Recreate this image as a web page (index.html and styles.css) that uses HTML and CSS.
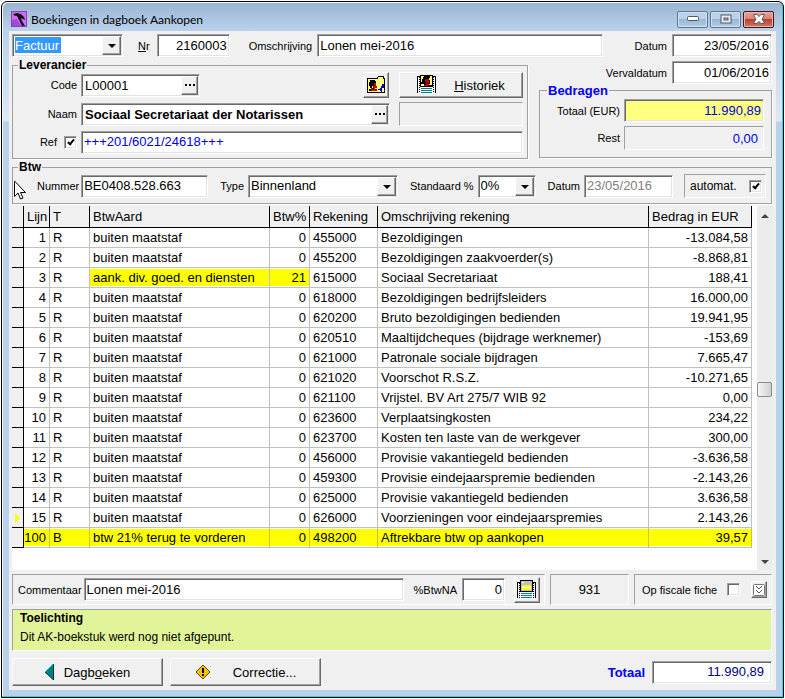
FILE: index.html
```html
<!DOCTYPE html>
<html lang="nl">
<head>
  <meta charset="utf-8">
  <title>Boekingen in dagboek Aankopen</title>
  <link rel="stylesheet" href="styles.css">
</head>
<body>
<div class="window">
  <div class="title-bar">
    <svg class="app-icon" width="16" height="16" viewBox="0 0 16 16">
      <rect width="16" height="16" fill="#8a3fb0"/>
      <rect x="1" y="1" width="14" height="14" fill="#cf6df0"/>
      <path d="M1 15V9l5-1 4 7z" fill="#a548d8"/>
      <path d="M2 3l4-1 4 1 3 3 1 3-2-1-2-1 1 3 3 5h-3L8 9 6 5 4 5z" fill="#140a20"/>
    </svg>
    <span class="title">Boekingen in dagboek Aankopen</span>
    <button class="win-button" aria-label="Minimaliseren">
      <svg width="12" height="6" viewBox="0 0 12 6"><rect x=".5" y=".5" width="11" height="4" rx="1" fill="#fff" stroke="#535666"/></svg>
    </button>
    <button class="win-button" aria-label="Maximaliseren">
      <svg width="12" height="10" viewBox="0 0 12 10"><rect x="1" y="1" width="10" height="8" fill="#e8eef5" stroke="#535666"/><rect x="4" y="4" width="4" height="2" fill="#a9c3de" stroke="#535666"/></svg>
    </button>
    <button class="win-button win-close" aria-label="Sluiten">
      <svg width="12" height="10" viewBox="0 0 12 10"><path d="M1 .5h3l2 2 2-2h3V2L9 5l2 3v1.500H8l-2-2-2 2H1V8l2-3-2-3z" fill="#fff" stroke="#535666"/></svg>
    </button>
  </div>

  <div class="content">
    <div class="top-row">
      <span class="combo combo-doc">
        <select class="doc-type" aria-label="Documenttype">
          <option>Factuur</option>
        </select>
      </span>
      <label class="nr-label" for="nr"><u>N</u>r</label>
      <input class="field nr right" id="nr" value="2160003">
      <label class="oms-label" for="omschrijving">Omschrijving</label>
      <input class="field grow" id="omschrijving" value="Lonen mei-2016">
      <label class="date-label" for="datum">Datum</label>
      <input class="field date right" id="datum" value="23/05/2016">
    </div>

    <div class="main-grid">
      <fieldset class="supplier">
        <legend>Leverancier</legend>
        <label for="code">Code</label>
        <div class="code-cell">
          <div class="lookup lookup-code">
            <input id="code" value="L00001">
            <button aria-label="Zoek code"><i></i><i></i><i></i></button>
          </div>
          <button class="button icon-button" aria-label="Leveranciersfiche">
            <svg width="20" height="20" viewBox="0 0 20 20" shape-rendering="crispEdges">
              <path d="M1 3h10V2l1-1h5l1 1v1h1v15H1z" fill="#000"/>
              <path d="M2 4h10V2h5v2h1v13H2z" fill="#ffff7d"/>
              <path d="M4 5h5v1h1v3H8v2H6v2H4v-2H3V7h1z" fill="#000"/>
              <path d="M8 8h2v3h1v2H9v1h2v2H4v-1h1v-2h2v-2h1z" fill="#c00000"/>
              <path d="M3 14h2v2H3zM6 13h2v1H6z" fill="#000"/>
              <path d="M16 9h2v4h-2v4h-1v-1h-1v-1h-2v-1h2v-1h1v-2h1z" fill="#0000e0"/>
            </svg>
          </button>
        </div>
        <button class="button history">
          <svg width="20" height="20" viewBox="0 0 20 20" shape-rendering="crispEdges">
            <path d="M0 1h3v17H0zM17 1h2v17h-2z" fill="#fff"/>
            <path d="M.5 18V1.500h3M16 1.500h2.500V18" fill="none" stroke="#000"/>
            <path d="M2.500 2v16M16.500 2v16" stroke="#000" stroke-dasharray="1 1"/>
            <rect x="3" y="11" width="13" height="8" fill="#fff"/>
            <path d="M4 13.500h11M4 15.500h11M4 17.500h11" stroke="#008080"/>
            <rect x="3" y="0" width="13" height="12" fill="#000"/>
            <path d="M4 1h3v1H6v2H5v3H4zM13 1h2v9h-3V9h1V5h-1V3h1zM4 9h3v2H4z" fill="#ffff7d"/>
            <path d="M9 4h3v4h-1v1h1v2H7v-1h2V7H8V5h1z" fill="#c00000"/>
          </svg>
          <span><u>H</u>istoriek</span>
        </button>
        <label for="naam">Naam</label>
        <div class="lookup lookup-name">
          <input id="naam" value="Sociaal Secretariaat der Notarissen">
          <button aria-label="Zoek naam"><i></i><i></i><i></i></button>
        </div>
        <div class="panel"></div>
        <div class="ref-label">
          <label for="ref">Ref</label>
          <input class="check" type="checkbox" checked aria-label="Gestructureerde mededeling">
        </div>
        <input class="field ref blue" id="ref" value="+++201/6021/24618+++">
      </fieldset>

      <div class="side">
        <div class="due-row">
          <label for="verval">Vervaldatum</label>
          <input class="field date right" id="verval" value="01/06/2016">
        </div>
        <fieldset class="amounts">
          <legend>Bedragen</legend>
          <label for="eur">Totaal (EUR)</label>
          <input class="field yellow right blue" id="eur" value="11.990,89">
          <label for="rest">Rest</label>
          <output class="panel rest blue" id="rest">0,00</output>
        </fieldset>
      </div>
    </div>

    <fieldset class="vat">
      <legend>Btw</legend>
      <label class="nummer-label" for="nummer">Nummer</label>
      <input class="field nummer" id="nummer" value="BE0408.528.663">
      <label for="type">Type</label>
      <span class="combo combo-type">
        <select id="type"><option>Binnenland</option></select>
      </span>
      <label for="standaard">Standaard %</label>
      <span class="combo combo-pct">
        <select id="standaard"><option>0%</option></select>
      </span>
      <label for="btwdatum">Datum</label>
      <input class="field btw-datum" id="btwdatum" value="23/05/2016" disabled>
      <div class="panel automat">
        <label for="automat">automat.</label>
        <input class="check" id="automat" type="checkbox" checked>
      </div>
      <svg class="cursor" width="13" height="20" viewBox="0 0 13 20"><path d="M.5 1v15.500l3.500-3.500 2.500 6 2.500-1-2.500-5.500h5z" fill="#fff" stroke="#000"/></svg>
    </fieldset>

    <div class="grid-box">
      <div class="table-wrap">
        <table class="lines">
          <colgroup>
            <col class="c-mark"><col class="c-lijn"><col class="c-t"><col class="c-aard"><col class="c-pct"><col class="c-rek"><col><col class="c-bedrag">
          </colgroup>
          <thead>
            <tr><th></th><th>Lijn</th><th>T</th><th>BtwAard</th><th>Btw%</th><th>Rekening</th><th>Omschrijving rekening</th><th>Bedrag in EUR</th></tr>
          </thead>
          <tbody>
            <tr><th></th><td>1</td><td>R</td><td>buiten maatstaf</td><td>0</td><td>455000</td><td>Bezoldigingen</td><td>-13.084,58</td></tr>
            <tr><th></th><td>2</td><td>R</td><td>buiten maatstaf</td><td>0</td><td>455200</td><td>Bezoldigingen zaakvoerder(s)</td><td>-8.868,81</td></tr>
            <tr><th></th><td>3</td><td>R</td><td class="hl">aank. div. goed. en diensten</td><td class="hl">21</td><td>615000</td><td>Sociaal Secretariaat</td><td>188,41</td></tr>
            <tr><th></th><td>4</td><td>R</td><td>buiten maatstaf</td><td>0</td><td>618000</td><td>Bezoldigingen bedrijfsleiders</td><td>16.000,00</td></tr>
            <tr><th></th><td>5</td><td>R</td><td>buiten maatstaf</td><td>0</td><td>620200</td><td>Bruto bezoldigingen bedienden</td><td>19.941,95</td></tr>
            <tr><th></th><td>6</td><td>R</td><td>buiten maatstaf</td><td>0</td><td>620510</td><td>Maaltijdcheques (bijdrage werknemer)</td><td>-153,69</td></tr>
            <tr><th></th><td>7</td><td>R</td><td>buiten maatstaf</td><td>0</td><td>621000</td><td>Patronale sociale bijdragen</td><td>7.665,47</td></tr>
            <tr><th></th><td>8</td><td>R</td><td>buiten maatstaf</td><td>0</td><td>621020</td><td>Voorschot R.S.Z.</td><td>-10.271,65</td></tr>
            <tr><th></th><td>9</td><td>R</td><td>buiten maatstaf</td><td>0</td><td>621100</td><td>Vrijstel. BV Art 275/7 WIB 92</td><td>0,00</td></tr>
            <tr><th></th><td>10</td><td>R</td><td>buiten maatstaf</td><td>0</td><td>623600</td><td>Verplaatsingkosten</td><td>234,22</td></tr>
            <tr><th></th><td>11</td><td>R</td><td>buiten maatstaf</td><td>0</td><td>623700</td><td>Kosten ten laste van de werkgever</td><td>300,00</td></tr>
            <tr><th></th><td>12</td><td>R</td><td>buiten maatstaf</td><td>0</td><td>456000</td><td>Provisie vakantiegeld bedienden</td><td>-3.636,58</td></tr>
            <tr><th></th><td>13</td><td>R</td><td>buiten maatstaf</td><td>0</td><td>459300</td><td>Provisie eindejaarspremie bedienden</td><td>-2.143,26</td></tr>
            <tr><th></th><td>14</td><td>R</td><td>buiten maatstaf</td><td>0</td><td>625000</td><td>Provisie vakantiegeld bedienden</td><td>3.636,58</td></tr>
            <tr><th><i class="current"></i></th><td>15</td><td>R</td><td>buiten maatstaf</td><td>0</td><td>626000</td><td>Voorzieningen voor eindejaarspremies</td><td>2.143,26</td></tr>
            <tr class="hl-row"><th></th><td>100</td><td>B</td><td>btw 21% terug te vorderen</td><td>0</td><td>498200</td><td>Aftrekbare btw op aankopen</td><td>39,57</td></tr>
          </tbody>
        </table>
      </div>
      <div class="scrollbar">
        <i class="arrow up"></i>
        <i class="thumb"></i>
        <i class="arrow down"></i>
      </div>
    </div>

    <div class="comment-row">
      <div class="panel comment">
        <label for="commentaar">Commentaar</label>
        <input class="field grow" id="commentaar" value="Lonen mei-2016">
        <label class="na-label" for="btwna">%BtwNA</label>
        <input class="field na right" id="btwna" value="0">
        <button class="button icon-button" aria-label="Detail">
          <svg width="20" height="20" viewBox="0 0 20 20" shape-rendering="crispEdges">
            <path d="M.5 18V2.500h3M16 2.500h2.500V18" fill="none" stroke="#000"/>
            <path d="M2.500 3v15M16.500 3v15" stroke="#000" stroke-dasharray="1 1"/>
            <rect x="3" y="11" width="13" height="8" fill="#fff"/>
            <path d="M4 13.500h11M4 15.500h11M4 17.500h11" stroke="#008080"/>
            <rect x="3" y="0" width="13" height="12" fill="#000"/>
            <rect x="4" y="1" width="11" height="10" fill="#c0c0c0"/>
            <path d="M5 5h9v2H5zM5 8h9v2H5z" fill="#ff0"/>
            <path d="M5 2h2v1H5zM5 7h9v1H5z" fill="#fff"/>
          </svg>
        </button>
      </div>
      <div class="panel number">931</div>
      <div class="panel fiche">
        <label for="fiche">Op fiscale fiche</label>
        <input class="check" id="fiche" type="checkbox">
        <button class="button small-button" aria-label="Meer">
          <svg width="12" height="12" viewBox="0 0 12 12"><rect x=".5" y=".5" width="11" height="11" rx="1" fill="#fff" stroke="#777"/><path d="M3 2l3 3 3-3M3 6l3 3 3-3" fill="none" stroke="#555"/></svg>
        </button>
      </div>
    </div>

    <div class="note">
      <b>Toelichting</b>
      <p>Dit AK-boekstuk werd nog niet afgepunt.</p>
    </div>

    <div class="footer">
      <button class="button big">
        <svg width="9" height="16" viewBox="0 0 9 16"><path d="M8.500 0v16L0 8z" fill="#008080"/><path d="M8 0L0 8" stroke="#00e0e0"/><path d="M8.500 0v16L0 8" fill="none" stroke="#034"/></svg>
        <span>Dagb<u>o</u>eken</span>
      </button>
      <button class="button big correct">
        <svg width="16" height="16" viewBox="0 0 16 16"><path d="M8 1l7 7-7 7-7-7z" fill="#f8c400" stroke="#5a4600"/><path d="M7 4h2v5H7zM7 10h2v2H7z" fill="#000"/></svg>
        <span>Correctie...</span>
      </button>
      <label for="totaal">Totaal</label>
      <input class="field total right" id="totaal" value="11.990,89">
    </div>
  </div>
</div>
</body>
</html>
```
FILE: styles.css
```css
* {
  box-sizing: border-box;
}

body {
  margin: 0;
  background: #fff;
  color: #000;
  font-family: "Liberation Sans", Arial, sans-serif;
  font-size: 11px;
}

input, select, button, output {
  font-family: inherit;
  font-size: 13px;
  color: inherit;
  margin: 0;
}

/* window frame */
.window {
  display: flex;
  flex-direction: column;
  min-height: calc(100vh - 2px);
  margin: 1px;
  padding: 1px 7px 7px;
  border: 1px solid #000;
  border-radius: 6px 6px 0 0;
  background: linear-gradient(#99b4d1 0, #b9d1ea 28px, #dde9f6 119px, #b9d1ea 120px);
  box-shadow: inset -1px -1px #35d3ea, inset 1px 1px #f4f8fc;
}

.title-bar {
  display: flex;
  align-items: center;
  gap: 2px;
  height: 28px;
  padding: 4px 2px 0;
}

.title {
  flex: 1;
  padding-left: 2px;
  font-family: Lato, "Open Sans", sans-serif;
  font-size: 12px;
}

.win-button {
  display: flex;
  align-items: center;
  justify-content: center;
  width: 31px;
  height: 17px;
  padding: 0;
  border: 1px solid #5f7690;
  border-radius: 2px;
  background: linear-gradient(#bdd2e8 0 50%, #9ab6d3 50%, #b3cde8);
  box-shadow: inset 0 0 0 1px #cfe0f1;
}

.win-close {
  border-color: #431422;
  background: linear-gradient(#e6a193 0, #d88070 50%, #b8402c 50%, #d27a62);
  box-shadow: inset 0 0 0 1px #eab5aa;
}

.content {
  display: flex;
  flex-direction: column;
  flex: 1;
  padding: 3px 4px 4px 3px;
  background: #f0f0f0;
}

/* shared controls */
.field, .lookup, .combo {
  height: 23px;
  border: 1px solid;
  border-color: #a0a0a0 #fff #fff #a0a0a0;
  box-shadow: inset 1px 1px #696969, inset -1px -1px #e3e3e3;
  background: #fff;
}

.field {
  padding: 0 2px 1px;
  min-width: 0;
}

.right {
  text-align: right;
}

.grow {
  flex: 1;
}

.blue {
  color: #0000e0;
}

.combo {
  position: relative;
  display: block;
}

.combo select {
  appearance: none;
  width: 100%;
  height: 100%;
  padding: 0 18px 1px 2px;
  border: none;
  background: transparent;
}

.combo::before {
  content: "";
  position: absolute;
  top: 1px;
  right: 1px;
  bottom: 1px;
  width: 17px;
  border: 1px solid;
  border-color: #fff #696969 #696969 #fff;
  box-shadow: inset -1px -1px #a0a0a0;
  background: #f0f0f0;
  pointer-events: none;
}

.combo::after {
  content: "";
  position: absolute;
  top: 9px;
  right: 6px;
  border: 4px solid transparent;
  border-top-color: #000;
  border-bottom: none;
  pointer-events: none;
}

.combo .doc-type {
  color: #fff;
  background: linear-gradient(#39f, #39f) 2px 2px / 46px 16px no-repeat;
}

.lookup {
  display: flex;
  padding: 1px;
}

.lookup input {
  flex: 1;
  min-width: 0;
  padding: 0 2px;
  border: none;
  background: transparent;
}

.lookup button {
  display: flex;
  align-items: center;
  justify-content: center;
  gap: 2px;
  width: 17px;
  padding: 0;
  border: 1px solid;
  border-color: #fff #696969 #696969 #fff;
  box-shadow: inset -1px -1px #a0a0a0;
  background: #f0f0f0;
}

.lookup i {
  width: 2px;
  height: 2px;
  background: #000;
}

.button {
  display: flex;
  align-items: center;
  justify-content: center;
  padding: 0;
  border: 1px solid;
  border-color: #fff #696969 #696969 #fff;
  box-shadow: inset -1px -1px #a0a0a0;
  background: #f0f0f0;
}

.icon-button {
  width: 26px;
  height: 26px;
}

.panel {
  border: 1px solid;
  border-color: #a0a0a0 #fff #fff #a0a0a0;
}

.check {
  appearance: none;
  flex: none;
  width: 13px;
  height: 13px;
  border: 1px solid;
  border-color: #a0a0a0 #fff #fff #a0a0a0;
  box-shadow: inset 1px 1px #696969, inset -1px -1px #e3e3e3;
  background: #fff;
}

.check:checked::before {
  content: "";
  display: block;
  width: 2px;
  height: 5px;
  margin: 1px 0 0 4px;
  border: solid #000;
  border-width: 0 2px 2px 0;
  box-sizing: content-box;
  transform: rotate(40deg);
}

fieldset {
  min-width: 0;
  margin: 0;
  border: 1px solid #a0a0a0;
  box-shadow: 1px 1px #fff;
}

legend {
  margin: 0;
  padding: 0 1px;
  font-size: 12px;
  line-height: 13px;
  font-weight: bold;
}

/* header fields */
.top-row {
  display: flex;
  align-items: center;
}

.combo-doc {
  width: 111px;
}

.nr-label {
  padding: 0 7px 0 15px;
}

.nr {
  width: 73px;
}

.oms-label {
  padding: 0 5px 0 19px;
}

.date-label {
  width: 69px;
  padding-right: 5px;
  text-align: right;
}

.date {
  width: 100px;
}

.main-grid {
  display: grid;
  grid-template-columns: 1fr 233px;
  gap: 11px;
  margin-top: 2px;
}

.supplier {
  display: grid;
  grid-template-columns: 64px 1fr 124px;
  grid-template-rows: 26px 24px 24px;
  align-items: center;
  gap: 4px;
  padding: 0 4px 4px 0;
}

.supplier legend, .vat legend {
  margin-left: 5px;
}

.supplier > label, .ref-label, .amounts label {
  text-align: right;
}

.code-cell {
  display: flex;
  align-items: center;
  justify-content: space-between;
  padding-right: 6px;
}

.lookup-code {
  width: 119px;
}

.lookup-name {
  margin-right: 5px;
}

.lookup-name input {
  font-weight: bold;
}

.history {
  gap: 17px;
  height: 26px;
}

.supplier .panel {
  height: 24px;
}

.ref-label {
  display: flex;
  align-items: center;
  justify-content: flex-end;
  gap: 7px;
}

.ref {
  grid-column: 2 / 4;
}

.due-row {
  display: flex;
  align-items: center;
  justify-content: flex-end;
  gap: 5px;
  padding-top: 2px;
}

.amounts {
  display: grid;
  grid-template-columns: 80px 1fr;
  align-items: center;
  gap: 4px;
  padding: 2px 7px 7px 0;
}

.amounts legend {
  margin-left: 7px;
  font-size: 13px;
  color: #0000ff;
}

.yellow {
  background: #ffff80;
}

.rest {
  height: 24px;
  padding: 0 5px;
  line-height: 23px;
  text-align: right;
}

.vat {
  position: relative;
  display: flex;
  align-items: center;
  margin-top: 2px;
  padding: 0 5px 5px 0;
}

.vat > label {
  padding: 0 4px 0 12px;
}

.vat > .nummer-label {
  padding: 0 2px 0 24px;
}

.nummer {
  width: 127px;
}

.combo-type {
  flex: 1;
}

.combo-pct {
  width: 58px;
}

.btw-datum {
  width: 89px;
  color: #808080;
}

.automat {
  display: flex;
  align-items: center;
  justify-content: space-between;
  width: 82px;
  height: 24px;
  margin-left: 11px;
  padding: 0 3px 0 5px;
  font-size: 12px;
}

.cursor {
  position: absolute;
  left: 1px;
  top: 6px;
}

/* booking lines */
.grid-box {
  display: flex;
  flex: 1;
  margin-top: 2px;
}

.table-wrap {
  flex: 1;
  padding-right: 5px;
  background: #fff;
}

.lines {
  width: 100%;
  table-layout: fixed;
  border-spacing: 0;
  font-size: 13px;
}

.c-mark { width: 12px; }
.c-lijn { width: 26px; }
.c-t { width: 40px; }
.c-aard { width: 180px; }
.c-pct { width: 40px; }
.c-rek { width: 68px; }
.c-bedrag { width: 103px; }

.lines th, .lines td {
  height: 20px;
  padding: 0 3px;
  line-height: 19px;
  white-space: nowrap;
  text-align: left;
}

.lines td {
  border-right: 1px solid #c0c0c0;
  border-bottom: 1px solid #c0c0c0;
}

.lines th {
  border-right: 1px solid #000;
  border-bottom: 1px solid #000;
  background: #f0f0f0;
  font-weight: normal;
}

.lines thead th {
  height: 22px;
  padding: 0 2px 0 3px;
}

.lines tbody th {
  padding: 0;
}

.lines td:nth-child(2), .lines td:nth-child(5), .lines td:nth-child(8) {
  text-align: right;
}

.lines .hl, .hl-row td {
  background: #ff0;
  background-clip: padding-box;
  box-shadow: inset 0 1px #fff, inset 0 -1px #fff;
}

.lines .hl-row td {
  border-right-color: #c8c832;
}

.lines .hl-row td:nth-child(2) {
  padding-left: 0;
}

.current {
  display: block;
  margin-left: 3px;
  width: 0;
  border: 5px solid transparent;
  border-left-color: #ff0;
  border-right: none;
}

.scrollbar {
  display: flex;
  flex-direction: column;
  align-items: center;
  justify-content: space-between;
  width: 15px;
  padding: 8px 0 6px;
  background: #ececec;
}

.arrow {
  border: 4px solid transparent;
}

.up {
  border-top: none;
  border-bottom-color: #444;
}

.down {
  border-bottom: none;
  border-top-color: #444;
}

.thumb {
  width: 15px;
  height: 15px;
  border: 1px solid #8b8b8b;
  border-radius: 2px;
  background: linear-gradient(90deg, #f6f6f6, #d0d0d4);
}

/* bottom panels */
.comment-row {
  display: flex;
  gap: 5px;
  margin-top: 4px;
}

.comment-row .panel {
  display: flex;
  align-items: center;
  height: 31px;
}

.comment-row .comment {
  flex: 1;
  gap: 2px;
  padding: 0 4px 0 5px;
}

.comment .na-label {
  padding: 0 3px 0 8px;
}

.na {
  width: 43px;
  margin-right: 7px;
}

.comment-row .number {
  justify-content: center;
  width: 79px;
  font-size: 13px;
}

.comment-row .fiche {
  gap: 10px;
  width: 138px;
  padding: 0 4px 0 7px;
}

.fiche label {
  flex: 1;
  white-space: nowrap;
}

.fiche .check {
  margin-right: 1px;
}

.small-button {
  width: 17px;
  height: 17px;
}

.note {
  height: 42px;
  margin-top: 4px;
  padding: 1px 7px;
  border: 1px solid;
  border-color: #a0a0a0 #fff #fff #a0a0a0;
  background: #e2f499;
  font-size: 12px;
  line-height: 14px;
}

.note p {
  margin: 5px 0 0;
}

.footer {
  display: flex;
  align-items: center;
  margin-top: 7px;
}

.big {
  gap: 10px;
  width: 151px;
  height: 28px;
}

.correct {
  gap: 22px;
  margin-left: 7px;
}

.footer label {
  flex: 1;
  padding-right: 7px;
  font-size: 13px;
  font-weight: bold;
  text-align: right;
  color: #0000ff;
}

.total {
  width: 120px;
  padding-right: 7px;
  color: #000080;
}
```
